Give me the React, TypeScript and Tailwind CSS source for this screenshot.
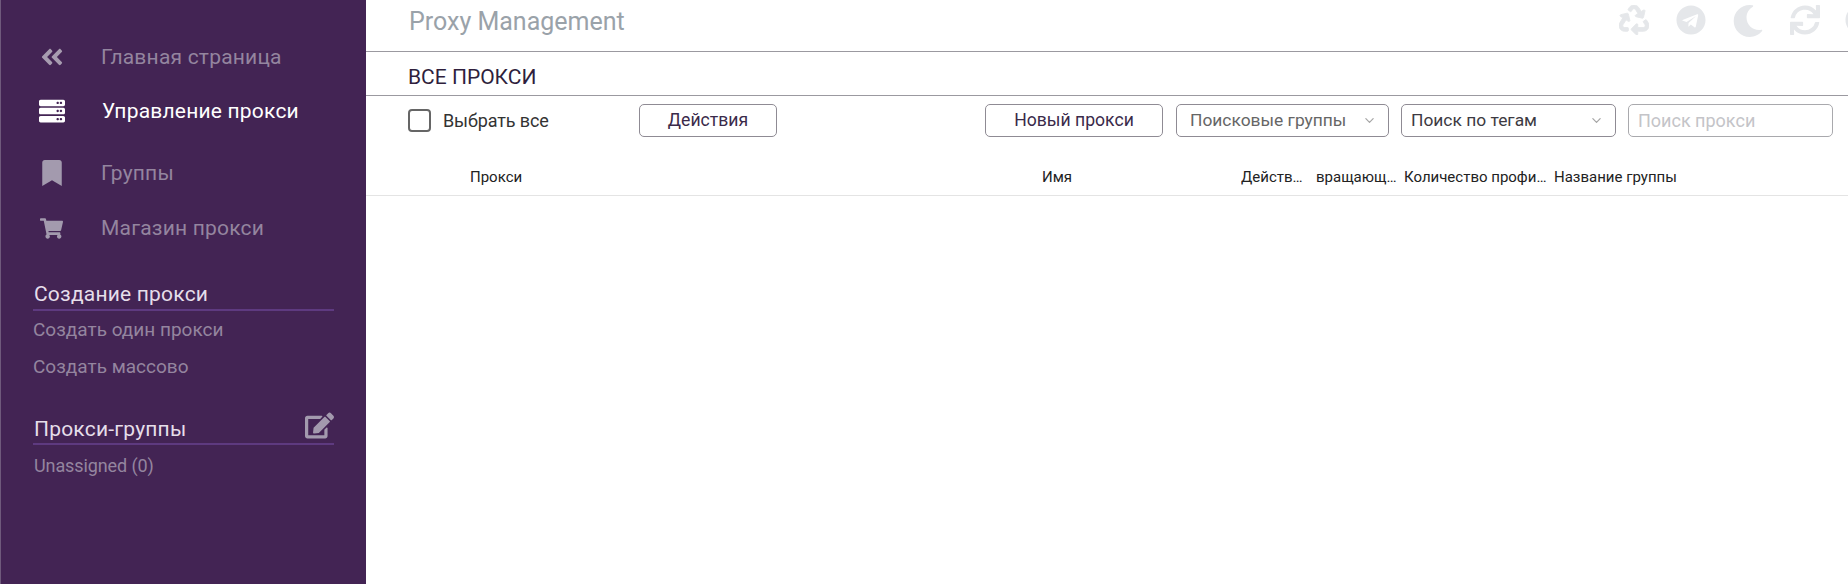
import { FaAngleDoubleLeft, FaBookmark, FaCircle, FaEdit, FaMoon, FaRecycle, FaServer, FaShoppingCart, FaSync, FaTelegram } from "react-icons/fa";
import { IoChevronDown } from "react-icons/io5";

const navClass = "flex items-center text-[21px] leading-6 tracking-[0.2px]";

function Sidebar() {
  return (
    <aside className="w-[366px] shrink-0 h-full bg-[#432454] border-l border-[#6f5a7c] pt-[45px] text-[#94859f]">
      <div className={navClass + " h-6"}>
        <span className="w-[100px] pl-[38px]"><FaAngleDoubleLeft className="text-[26px] text-[#a79cb0]" /></span>
        <span>Главная страница</span>
      </div>
      <div className={navClass + " h-6 mt-[30px] text-white"}>
        <span className="w-[101px] pl-[38px]"><FaServer className="text-[26px]" /></span>
        <span>Управление прокси</span>
      </div>
      <div className={navClass + " h-6 mt-[38px]"}>
        <span className="w-[100px] pl-[38px]"><FaBookmark className="text-[26px] text-[#a39aae]" /></span>
        <span>Группы</span>
      </div>
      <div className={navClass + " h-6 mt-[31px]"}>
        <span className="w-[100px] pl-[39px]"><FaShoppingCart className="text-[23px] text-[#a39aae]" /></span>
        <span>Магазин прокси</span>
      </div>
      <div className="mx-[32px] mt-[40px] w-[301px] h-[31px] border-b-2 border-[#5e3a80] pl-[1px] text-[21px] leading-7 tracking-[0.2px] text-[#e6deea]">
        Создание прокси
      </div>
      <div className="ml-[32px] mt-[7px] text-[19px] leading-6">Создать один прокси</div>
      <div className="ml-[32px] mt-[13px] text-[19px] leading-6">Создать массово</div>
      <div className="mx-[32px] mt-[34px] w-[301px] h-[32px] border-b-2 border-[#5e3a80] pl-[1px] flex justify-between items-start text-[21px] leading-8 tracking-[0.2px] text-[#e6deea]">
        <span>Прокси-группы</span>
        <FaEdit className="text-[29px] -mt-[2px] text-[#a39aae]" />
      </div>
      <div className="ml-[33px] mt-[9px] text-[18px] leading-6 tracking-[-0.1px]">Unassigned (0)</div>
    </aside>
  );
}

function Field({ label, width, dark }: { label: string; width: string; dark?: boolean }) {
  return (
    <div className={"h-[33px] rounded-[5px] border border-[#8f8b94] flex items-center justify-between pr-[12px] text-[17.4px] " + width + (dark ? " pl-[9px] text-[#3d3a42]" : " pl-[13px] text-[#666]")}>
      <span>{label}</span>
      <IoChevronDown className="text-[13px] text-[#a5a5a5]" />
    </div>
  );
}

export default function App() {
  return (
    <div className="flex h-screen w-full overflow-hidden bg-white font-['Roboto',sans-serif]">
      <Sidebar />
      <main className="flex-1 min-w-0">
        <header className="h-[52px] border-b border-[#9b99a0] pl-[43px] flex items-start justify-between">
          <h1 className="text-[25px] leading-[44px] text-[#9aa2a9]">Proxy Management</h1>
          <div className="flex gap-[27px] pt-[5px] -mr-[27px] text-[30px] text-[#e5e7ea]">
            <FaRecycle stroke="currentColor" strokeWidth={16} />
            <FaTelegram />
            <FaMoon className="text-[32px] -mx-[1px]" />
            <FaSync />
            <FaCircle className="-ml-[2px]" />
          </div>
        </header>
        <div className="h-[44px] border-b border-[#9b99a0] pl-[42px] text-[21px] leading-[50px] text-[#2f1f3d]">ВСЕ ПРОКСИ</div>
        <div className="h-[41px] pt-[8px] pl-[42px] flex items-center">
          <span className="w-[23px] h-[23px] rounded-[4px] border-2 border-[#666]" />
          <span className="ml-[12px] w-[196px] text-[18px] tracking-[-0.1px] text-[#333]">Выбрать все</span>
          <button className="w-[138px] h-[33px] rounded-[5px] border border-[#8f8b94] text-[17.6px] text-[#3a2a4a]">Действия</button>
          <button className="ml-[208px] w-[178px] h-[33px] rounded-[5px] border border-[#8f8b94] text-[17.6px] text-[#3a2a4a]">Новый прокси</button>
          <div className="ml-[13px]"><Field label="Поисковые группы" width="w-[213px]" /></div>
          <div className="ml-[12px]"><Field label="Поиск по тегам" width="w-[215px]" dark /></div>
          <input placeholder="Поиск прокси" className="ml-[12px] w-[205px] h-[33px] rounded-[5px] border border-[#a9a9ad] px-[9px] text-[18px] placeholder:text-[#c4c4c8]" />
        </div>
        <div className="mt-[21px] h-[38px] border-b border-[#e4e4e4] pt-[2px] flex items-center pl-[104px] text-[15px] text-[#222]">
          <span className="w-[572px]">Прокси</span>
          <span className="w-[199px]">Имя</span>
          <span className="w-[75px] pr-[8px] truncate">Действующий</span>
          <span className="w-[88px] pr-[1px] truncate">вращающийся</span>
          <span className="w-[150px] pr-[2px] truncate">Количество профилей</span>
          <span>Название группы</span>
        </div>
      </main>
    </div>
  );
}
